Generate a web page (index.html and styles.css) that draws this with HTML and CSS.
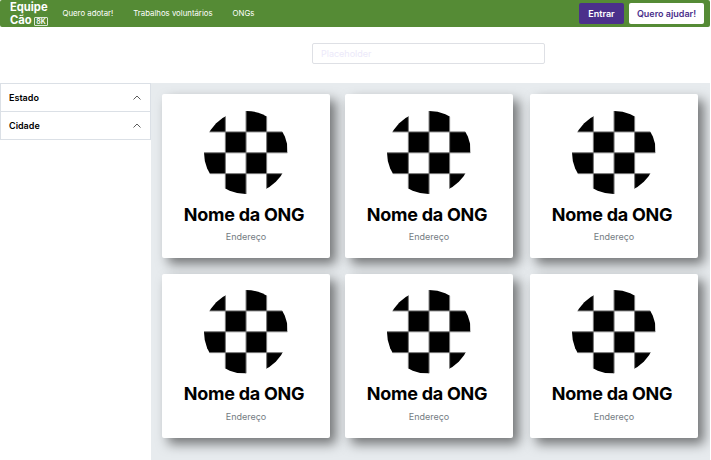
FILE: index.html
```html
<!DOCTYPE html>
<html lang="pt-BR">
<head>
<meta charset="utf-8">
<title>Equipe Cão</title>
<link rel="stylesheet" href="styles.css">
</head>
<body>
<svg class="defs" aria-hidden="true">
  <defs>
    <symbol id="checker" viewBox="0 0 84 84">
      <path d="M0 0H21.5V21H0zM42.3 0H63V21H42.3zM21.5 21H42.3V42H21.5zM63 21H84V42H63zM0 42H21.5V63H0zM42.3 42H63V63H42.3zM21.5 63H42.3V84H21.5zM63 63H84V84H63z"/>
      <path d="M21.5 0V84M42.3 0V84M63 0V84M0 21H84M0 42H84M0 63H84" stroke="#777" stroke-width="1" fill="none"/>
    </symbol>
    <symbol id="chevron" viewBox="0 0 8 5"><path d="M.5 4.5 4 1 7.5 4.5" fill="none" stroke="#333" stroke-width=".8"/></symbol>
  </defs>
</svg>
<header class="navbar">
  <div class="brand">Equipe<br>Cão <span class="tag">8K</span></div>
  <nav class="links"><a>Quero adotar!</a><a>Trabalhos voluntários</a><a>ONGs</a></nav>
  <div class="actions"><button class="btn login">Entrar</button><button class="btn help">Quero ajudar!</button></div>
</header>
<section class="search"><input type="text" placeholder="Placeholder"></section>
<div class="layout">
  <aside class="filters">
    <div class="filter">Estado<svg><use href="#chevron"/></svg></div>
    <div class="filter">Cidade<svg><use href="#chevron"/></svg></div>
  </aside>
  <main class="cards">
    <article class="card"><svg><use href="#checker"/></svg><h2>Nome da ONG</h2><p>Endereço</p></article>
    <article class="card"><svg><use href="#checker"/></svg><h2>Nome da ONG</h2><p>Endereço</p></article>
    <article class="card"><svg><use href="#checker"/></svg><h2>Nome da ONG</h2><p>Endereço</p></article>
    <article class="card"><svg><use href="#checker"/></svg><h2>Nome da ONG</h2><p>Endereço</p></article>
    <article class="card"><svg><use href="#checker"/></svg><h2>Nome da ONG</h2><p>Endereço</p></article>
    <article class="card"><svg><use href="#checker"/></svg><h2>Nome da ONG</h2><p>Endereço</p></article>
  </main>
</div>
</body>
</html>
```
FILE: styles.css
```css
* { box-sizing: border-box; }
body { margin: 0; width: 710px; height: 460px; overflow: hidden; font-family: Inter, "Liberation Sans", sans-serif; background: #fff; color: #000; }
.defs { display: none; }
.navbar { display: flex; align-items: center; height: 26.5px; padding: 0 6px 0 10px; background: #558b35; border-radius: 2px; color: #fff; }
.brand { width: 52.5px; padding-top: 1px; font-size: 11.2px; font-weight: 700; line-height: 13px; white-space: nowrap; }
.tag { display: inline-block; width: 13.5px; height: 9.5px; border: 1px solid #dce8d5; border-radius: 1px; font-size: 7px; font-weight: 600; line-height: 8px; text-align: center; }
.links { display: flex; gap: 20px; font-size: 7.8px; white-space: nowrap; }
.actions { display: flex; gap: 5px; margin-left: auto; }
.btn { height: 21px; padding: 0; border: 0; border-radius: 2px; font: 600 9px Inter, sans-serif; white-space: nowrap; }
.login { width: 45px; background: #4b308b; color: #fff; }
.help { width: 75px; background: #fff; color: #4b308b; }
.search { height: 56.5px; padding: 16px 0 0 312px; }
.search input { display: block; width: 233px; height: 21.5px; padding: 0 8px; border: 1px solid #dee0e5; border-radius: 2px; background: #fff; font: 9px Inter, sans-serif; }
.search input::placeholder { color: #ece9fa; opacity: 1; }
.layout { display: flex; height: 377px; }
.filters { width: 151px; flex: none; }
.filter { display: flex; align-items: center; justify-content: space-between; height: 29px; padding: 0 9px 0 8px; margin-bottom: -1px; border: 1px solid #dbe0e6; font-size: 9px; font-weight: 600; }
.filter svg { width: 8px; height: 5px; }
.cards { flex: 1; display: grid; grid-template-columns: 168px 168px 168px; grid-template-rows: 164px 164px; column-gap: 16px; row-gap: 15.5px; padding: 11px 11px 0; background: #e7ebee; overflow: hidden; }
.card { display: flex; flex-direction: column; align-items: center; padding-top: 16.5px; background: #fff; border-radius: 2px; box-shadow: 6px 6px 12px rgba(0, 0, 0, .5); }
.card:nth-child(3n + 2) { margin: 0 1px 0 -1px; }
.card svg { display: block; width: 83.5px; height: 83.5px; border-radius: 50%; }
.card h2 { margin: 9.5px 4px 0 0; font-size: 18px; font-weight: 700; line-height: 22px; letter-spacing: -.26px; white-space: nowrap; }
.card p { margin: 5.5px 0 0; font-size: 9px; line-height: 12px; color: #747b82; }
```
